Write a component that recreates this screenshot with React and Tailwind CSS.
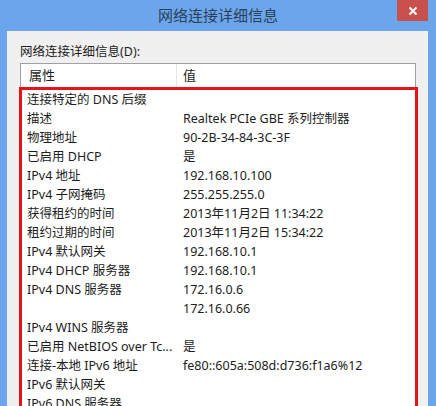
import React from 'react';

const rows = [
  ['连接特定的 DNS 后缀', ''],
  ['描述', 'Realtek PCIe GBE 系列控制器'],
  ['物理地址', '90-2B-34-84-3C-3F'],
  ['已启用 DHCP', '是'],
  ['IPv4 地址', '192.168.10.100'],
  ['IPv4 子网掩码', '255.255.255.0'],
  ['获得租约的时间', '2013年11月2日 11:34:22'],
  ['租约过期的时间', '2013年11月2日 15:34:22'],
  ['IPv4 默认网关', '192.168.10.1'],
  ['IPv4 DHCP 服务器', '192.168.10.1'],
  ['IPv4 DNS 服务器', '172.16.0.6'],
  ['', '172.16.0.66'],
  ['IPv4 WINS 服务器', ''],
  ['已启用 NetBIOS over Tc...', '是'],
  ['连接-本地 IPv6 地址', 'fe80::605a:508d:d736:f1a6%12'],
  ['IPv6 默认网关', ''],
  ['IPv6 DNS 服务器', ''],
];

const App = () => {
  return (
    <div
      className="w-[436px] h-[406px] bg-[#6ba6ec] overflow-hidden flex flex-col text-[#1c1c1c]"
      style={{ fontFamily: '"Noto Sans", "Noto Sans CJK SC", sans-serif' }}
    >
      {/* title bar */}
      <div className="relative h-[31px] shrink-0 flex items-center justify-center">
        <span className="text-[15px] leading-[31px] text-[#2b3f58]">网络连接详细信息</span>
        <div className="absolute top-0 right-[8px] w-[31px] h-[21px] bg-[#c8504d] flex items-center justify-center">
          <svg width="10" height="10" viewBox="0 0 10 10">
            <path d="M1.5 1.5 L8.5 8.5 M8.5 1.5 L1.5 8.5" stroke="#fff" strokeWidth="2" />
          </svg>
        </div>
      </div>

      {/* body */}
      <div className="flex-1 ml-[7px] mr-[8px] bg-[#f0f0f0] pl-[13px] pr-[12px] pt-[12px] overflow-hidden">
        <div className="text-[12.5px] leading-[18px] mb-[2px]">网络连接详细信息(D):</div>
        <div className="border border-[#a0a0a0] bg-white">
          <div className="flex h-[23px] items-center text-[13px]">
            <div className="w-[156px] h-full pl-[8px] flex items-center border-r border-[#e5e5e5]">属性</div>
            <div className="pl-[6px]">值</div>
          </div>
          <div className="-ml-[2px] -mr-[3px] border-[3px] border-[#e4141a] pb-[20px]">
            {rows.map(([k, v], i) => (
              <div key={i} className="flex h-[19px] items-center text-[12.5px] leading-[19px] whitespace-nowrap">
                <div className="w-[161px] pl-[5px] shrink-0">{k}</div>
                <div>{v}</div>
              </div>
            ))}
          </div>
        </div>
      </div>
    </div>
  );
};

export default App;
